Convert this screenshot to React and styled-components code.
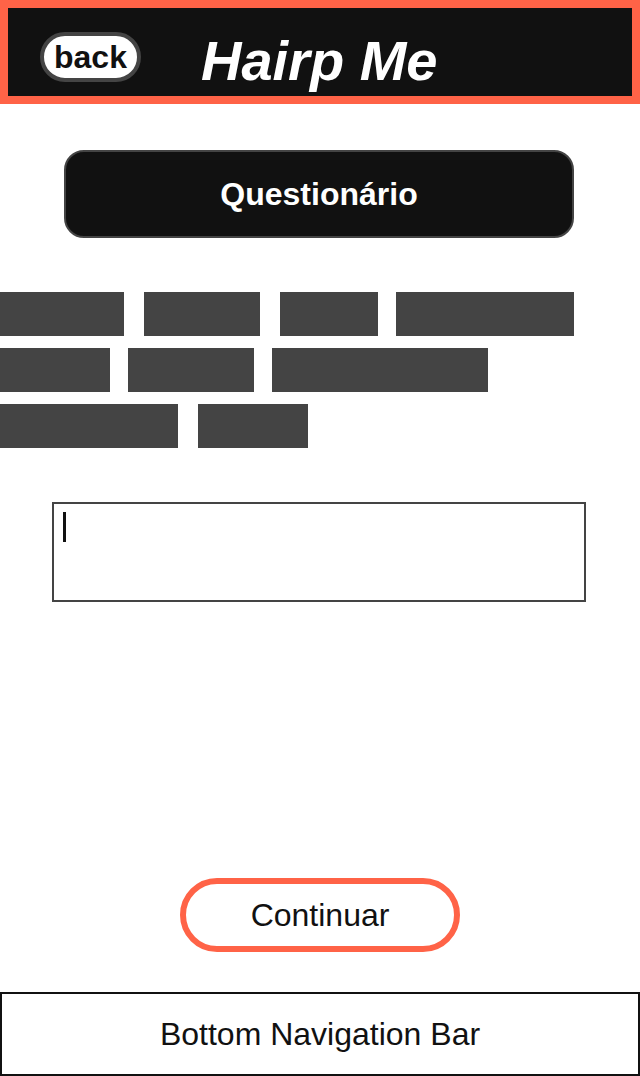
import React from "react";
import styled, { createGlobalStyle } from "styled-components";

const GlobalStyle = createGlobalStyle`
  html, body {
    margin: 0;
    padding: 0;
    background: #ffffff;
    font-family: "Liberation Sans", Arial, sans-serif;
  }
  * { box-sizing: border-box; }
`;

const Page = styled.div`
  display: flex;
  flex-direction: column;
  min-height: 100vh;
  width: 640px;
`;

const Header = styled.header`
  display: flex;
  align-items: flex-start;
  gap: 60px;
  height: 104px;
  padding: 24px 0 0 32px;
  background: #111111;
  border: 8px solid #ff6347;
`;

const BackButton = styled.button`
  height: 50px;
  padding: 0 10px;
  border: 4px solid #444444;
  border-radius: 25px;
  background: #ffffff;
  color: #111111;
  font-family: "Liberation Sans", Arial, sans-serif;
  font-size: 32px;
  font-weight: 700;
  line-height: 40px;
  cursor: pointer;
`;

const Title = styled.h1`
  margin: -3px 0 0;
  color: #ffffff;
  font-size: 56px;
  font-style: italic;
  font-weight: 700;
  line-height: 64px;
`;

const SectionButton = styled.button`
  display: block;
  width: 510px;
  height: 88px;
  margin: 46px 0 0 64px;
  border: 2px solid #444444;
  border-radius: 20px;
  background: #111111;
  color: #ffffff;
  font-family: "Liberation Sans", Arial, sans-serif;
  font-size: 32px;
  font-weight: 700;
`;

const TagList = styled.div`
  display: flex;
  flex-wrap: wrap;
  row-gap: 12px;
  margin-top: 54px;
`;

const Tag = styled.span`
  display: block;
  width: ${(p) => p.$w}px;
  height: 44px;
  margin-right: ${(p) => p.$gap}px;
  background: #444444;
`;

const InputWrap = styled.div`
  position: relative;
  width: 534px;
  height: 100px;
  margin: 54px 0 0 52px;
`;

const TextArea = styled.textarea`
  display: block;
  width: 100%;
  height: 100%;
  padding: 8px 10px;
  border: 2px solid #444444;
  border-radius: 0;
  resize: none;
  outline: none;
  background: #ffffff;
  font-family: "Liberation Sans", Arial, sans-serif;
  font-size: 24px;
`;

const Caret = styled.span`
  position: absolute;
  left: 11px;
  top: 10px;
  width: 3px;
  height: 30px;
  background: #111111;
`;

const Spacer = styled.div`
  flex: 1;
`;

const ContinueButton = styled.button`
  align-self: center;
  width: 280px;
  height: 74px;
  margin-bottom: 40px;
  border: 6px solid #ff6347;
  border-radius: 37px;
  background: #ffffff;
  color: #111111;
  font-family: "Liberation Sans", Arial, sans-serif;
  font-size: 32px;
  font-weight: 400;
`;

const BottomNav = styled.nav`
  display: flex;
  align-items: center;
  justify-content: center;
  height: 84px;
  border: 2px solid #111111;
  color: #111111;
  font-size: 32px;
`;

const tags = [
  { w: 124, gap: 20 },
  { w: 116, gap: 20 },
  { w: 98, gap: 18 },
  { w: 178, gap: 40 },
  { w: 110, gap: 18 },
  { w: 126, gap: 18 },
  { w: 216, gap: 40 },
  { w: 178, gap: 20 },
  { w: 110, gap: 20 },
];

export default function App() {
  return (
    <>
      <GlobalStyle />
      <Page>
        <Header>
          <BackButton>back</BackButton>
          <Title>Hairp Me</Title>
        </Header>
        <SectionButton>Questionário</SectionButton>
        <TagList>
          {tags.map((t, i) => (
            <Tag key={i} $w={t.w} $gap={t.gap} />
          ))}
        </TagList>
        <InputWrap>
          <TextArea />
          <Caret />
        </InputWrap>
        <Spacer />
        <ContinueButton>Continuar</ContinueButton>
        <BottomNav>Bottom Navigation Bar</BottomNav>
      </Page>
    </>
  );
}
